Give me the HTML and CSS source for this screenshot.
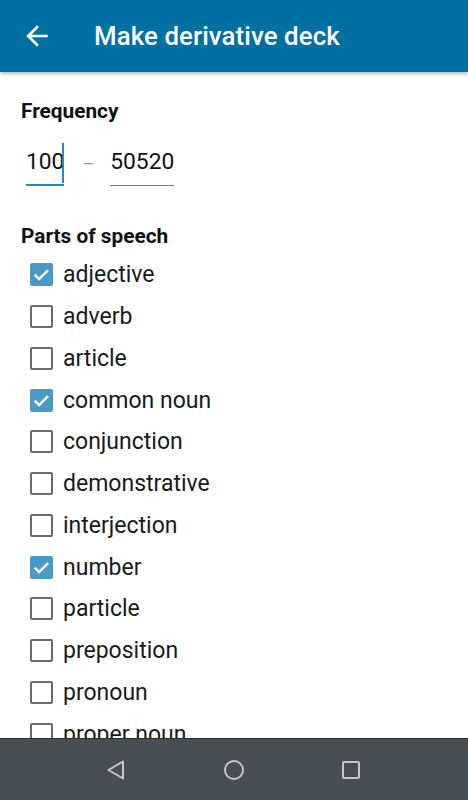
FILE: index.html
```html
<!DOCTYPE html>
<html>
<head>
<meta charset="utf-8">
<link rel="stylesheet" href="styles.css">
</head>
<body>
<div class="screen">
  <header class="appbar">
    <svg class="back" width="32" height="32" viewBox="0 0 24 24"><path d="M20 11H7.83l5.59-5.59L12 4l-8 8 8 8 1.410-1.41L7.83 13H20v-2z" fill="#fff"/></svg>
    <h1 class="title">Make derivative deck</h1>
  </header>
  <main class="content">
    <h2 class="label freq">Frequency</h2>
    <div class="range">
      <div class="field active"><span>100</span><i class="cursor"></i></div>
      <span class="dash">–</span>
      <div class="field"><span>50520</span></div>
    </div>
    <h2 class="label pos">Parts of speech</h2>
    <ul class="list">
      <li class="on"><span class="box"><svg viewBox="0 0 22 22" width="22" height="22"><path d="M4.5 11.2l4.2 4.2 8.6-8.6" stroke="#fff" stroke-width="2.4" fill="none"/></svg></span>adjective</li>
      <li><span class="box"></span>adverb</li>
      <li><span class="box"></span>article</li>
      <li class="on"><span class="box"><svg viewBox="0 0 22 22" width="22" height="22"><path d="M4.5 11.2l4.2 4.2 8.6-8.6" stroke="#fff" stroke-width="2.4" fill="none"/></svg></span>common noun</li>
      <li><span class="box"></span>conjunction</li>
      <li><span class="box"></span>demonstrative</li>
      <li><span class="box"></span>interjection</li>
      <li class="on"><span class="box"><svg viewBox="0 0 22 22" width="22" height="22"><path d="M4.5 11.2l4.2 4.2 8.6-8.6" stroke="#fff" stroke-width="2.4" fill="none"/></svg></span>number</li>
      <li><span class="box"></span>particle</li>
      <li><span class="box"></span>preposition</li>
      <li><span class="box"></span>pronoun</li>
      <li><span class="box"></span>proper noun</li>
    </ul>
  </main>
  <nav class="navbar">
    <svg width="20" height="22" viewBox="0 0 20 22"><path d="M17 2.5L2.5 11 17 19.5z" fill="none" stroke="#c4c7c9" stroke-width="2" stroke-linejoin="round"/></svg>
    <svg width="22" height="22" viewBox="0 0 22 22"><circle cx="11" cy="11" r="9" fill="none" stroke="#c4c7c9" stroke-width="2"/></svg>
    <svg width="20" height="20" viewBox="0 0 20 20"><rect x="2" y="2" width="16" height="16" rx="1" fill="none" stroke="#c4c7c9" stroke-width="2"/></svg>
  </nav>
</div>
</body>
</html>
```
FILE: styles.css
```css
* { box-sizing: border-box; }
html, body { margin: 0; padding: 0; }
body { font-family: Roboto, "Noto Sans", sans-serif; background: #fff; color: #1c1c1c; }
.screen { width: 468px; height: 800px; display: flex; flex-direction: column; overflow: hidden; }
.appbar {
  height: 72px; flex: none; background: #0070a3; display: flex; align-items: center;
  padding-left: 21px; box-shadow: 0 2px 4px rgba(0,0,0,0.28); position: relative; z-index: 2;
}
.back { width: 32px; height: 32px; flex: none; }
.title { margin: 0 0 0 41px; color: #fff; font-size: 25.8px; font-weight: 500; letter-spacing: 0.1px; }
.content { flex: 1; min-height: 0; overflow: hidden; padding: 0 0 0 21px; }
.label { margin: 0; font-size: 20.8px; font-weight: 700; color: #111; line-height: 24px; }
.label.freq { margin-top: 27px; }
.range { display: flex; align-items: flex-end; margin-top: 25px; padding-left: 5px; }
.field { position: relative; font-size: 22.8px; line-height: 28px; padding-bottom: 9px; border-bottom: 1px solid #777; color: #111; }
.field.active { border-bottom: 2px solid #1f8ec0; padding-bottom: 8px; }
.cursor { position: absolute; right: 0; top: -5px; width: 2px; height: 40px; background: #1f8ec0; }
.dash { font-size: 18px; color: #999; margin: 0 16px 0 18px; padding-bottom: 12px; }
.label.pos { margin-top: 38px; }
.list { list-style: none; margin: 6px 0 0 0; padding: 0 0 0 9px; }
.list li { display: flex; align-items: center; height: 41.75px; flex: none; font-size: 23px; color: #1a1a1a; }
.box { width: 23px; height: 23px; border: 2px solid #6b6b6b; border-radius: 2px; margin-right: 10px; flex: none; display: flex; }
.on .box { background: #4a9ac6; border-color: #4a9ac6; }
.on .box svg { margin: -2px; width: 23px; height: 23px; }
.navbar {
  height: 62px; flex: none; background: #474f55; border-top: 1px solid #2a2f33;
  display: flex; align-items: center; justify-content: space-between; padding: 0 107px 0 106px;
}
```
